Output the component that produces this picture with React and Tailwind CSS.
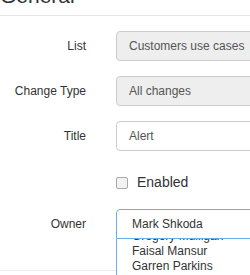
export default function App() {
  const rows = [
    { label: 'List', value: 'Customers use cases', disabled: true },
    { label: 'Change Type', value: 'All changes', disabled: true },
    { label: 'Title', value: 'Alert', disabled: false },
  ];

  return (
    <div className="relative w-[250px] h-[275px] overflow-hidden bg-white font-['Liberation_Sans',Arial,sans-serif] text-[#333]">
      {/* section header */}
      <div className="-mt-[15px] pb-[9px] border-b border-[#e5e5e5]">
        <h2 className="text-[21px] leading-[21px] text-[#333]">General</h2>
      </div>

      <div className="pt-[15px] flex flex-col gap-[15px]">
        {rows.map((row) => (
          <div key={row.label} className="flex items-center gap-[30px]">
            <label className="w-[86px] shrink-0 text-right text-[12px] text-[#333]">{row.label}</label>
            <div
              className={`w-[200px] shrink-0 h-[30px] flex items-center pl-[12px] border border-[#ccc] rounded-[4px] text-[12px] text-[#555] ${
                row.disabled ? 'bg-[#eeeeee]' : 'bg-white'
              }`}
            >
              {row.value}
            </div>
          </div>
        ))}

        <div className="flex items-center gap-[30px] mt-[6px]">
          <div className="w-[86px] shrink-0" />
          <div className="flex items-center gap-[9px]">
            <span className="w-[12px] h-[12px] rounded-[2px] border border-[#a9a9a9] bg-[#f2f2f2]" />
            <span className="text-[14px] text-[#333]">Enabled</span>
          </div>
        </div>

        <div className="flex items-center gap-[30px] mt-[1px]">
          <label className="w-[86px] shrink-0 text-right text-[12px] text-[#333]">Owner</label>
          <div className="relative w-[200px] shrink-0">
            <div className="h-[30px] flex items-center pl-[15px] border border-[#66afe9] rounded-t-[4px] rounded-br-[4px] bg-white text-[12px] text-[#333]">
              Mark Shkoda
            </div>
            {/* open dropdown */}
            <div className="absolute left-0 top-[30px] w-[200px] h-[60px] overflow-hidden border-l border-r border-[#66afe9] bg-white">
              <div className="-mt-[10px] pl-[15px] text-[12px] leading-[15px] text-[#333]">
                <div>Gregory Mulligan</div>
                <div>Faisal Mansur</div>
                <div>Garren Parkins</div>
                <div>Ian Kowalski</div>
              </div>
            </div>
          </div>
        </div>
      </div>

      <div className="mt-[31px] border-b border-[#eee]" />
    </div>
  );
}
